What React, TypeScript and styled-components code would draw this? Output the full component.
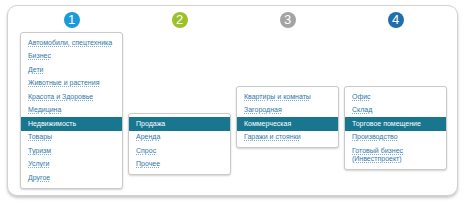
import React from "react";
import styled, { createGlobalStyle } from "styled-components";

const ROW = 13.5;

const GlobalStyle = createGlobalStyle`
  html, body {
    margin: 0;
    padding: 0;
    background: #ffffff;
  }
  body {
    font-family: "Liberation Sans", Arial, sans-serif;
  }
`;

interface Column {
  color: string;
  items: string[];
  selected: number;
}

const columns: Column[] = [
  {
    color: "#1c9ad8",
    selected: 6,
    items: [
      "Автомобили, спецтехника",
      "Бизнес",
      "Дети",
      "Животные и растения",
      "Красота и Здоровье",
      "Медицина",
      "Недвижимость",
      "Товары",
      "Туризм",
      "Услуги",
      "Другое",
    ],
  },
  {
    color: "#9cc129",
    selected: 0,
    items: ["Продажа", "Аренда", "Спрос", "Прочее"],
  },
  {
    color: "#a3a3a3",
    selected: 2,
    items: ["Квартиры и комнаты", "Загородная", "Коммерческая", "Гаражи и стоянки"],
  },
  {
    color: "#1f6fae",
    selected: 2,
    items: [
      "Офис",
      "Склад",
      "Торговое помещение",
      "Производство",
      "Готовый бизнес (Инвестпроект)",
    ],
  },
];

const Page = styled.div`
  padding: 5px 9px 9px 7px;
`;

const Card = styled.div`
  height: 191px;
  box-sizing: border-box;
  border: 1px solid #d2d2d2;
  border-radius: 10px;
  box-shadow: 0 2px 3px rgba(0, 0, 0, 0.22);
  background: #fff;
  padding: 6px 0 0 12px;
  display: grid;
  grid-template-columns: repeat(4, 103px);
  column-gap: 5px;
  align-items: start;
`;

const Step = styled.div`
  display: flex;
  flex-direction: column;
  align-items: center;
`;

const Badge = styled.div<{ $color: string }>`
  width: 16px;
  height: 16px;
  border-radius: 50%;
  background: ${(p) => p.$color};
  color: #fff;
  font-size: 13px;
  line-height: 16px;
  text-align: center;
`;

const Box = styled.ul<{ $offset: number }>`
  list-style: none;
  margin: ${(p) => 4 + p.$offset}px 0 0;
  padding: 3px 0;
  width: 100%;
  box-sizing: border-box;
  background: #fff;
  border: 1px solid #cacaca;
  border-radius: 3px;
  box-shadow: 0 1px 2px rgba(0, 0, 0, 0.18);
`;

const Item = styled.li<{ $active: boolean }>`
  min-height: ${ROW}px;
  padding: 2.5px 7px 2px;
  box-sizing: border-box;
  font-size: 7px;
  line-height: 8.5px;
  background: ${(p) => (p.$active ? "#18768f" : "transparent")};
  color: ${(p) => (p.$active ? "#ffffff" : "#2f77ad")};
`;

const Label = styled.span<{ $active: boolean }>`
  text-decoration: ${(p) => (p.$active ? "none" : "underline dotted #7fb0d2")};
  text-underline-offset: 1px;
`;

export default function App() {
  const base = columns[0].selected;
  return (
    <>
      <GlobalStyle />
      <Page>
        <Card>
          {columns.map((col, i) => (
            <Step key={i}>
              <Badge $color={col.color}>{i + 1}</Badge>
              <Box $offset={(base - col.selected) * ROW}>
                {col.items.map((it, j) => (
                  <Item key={j} $active={j === col.selected}>
                    <Label $active={j === col.selected}>{it}</Label>
                  </Item>
                ))}
              </Box>
            </Step>
          ))}
        </Card>
      </Page>
    </>
  );
}
